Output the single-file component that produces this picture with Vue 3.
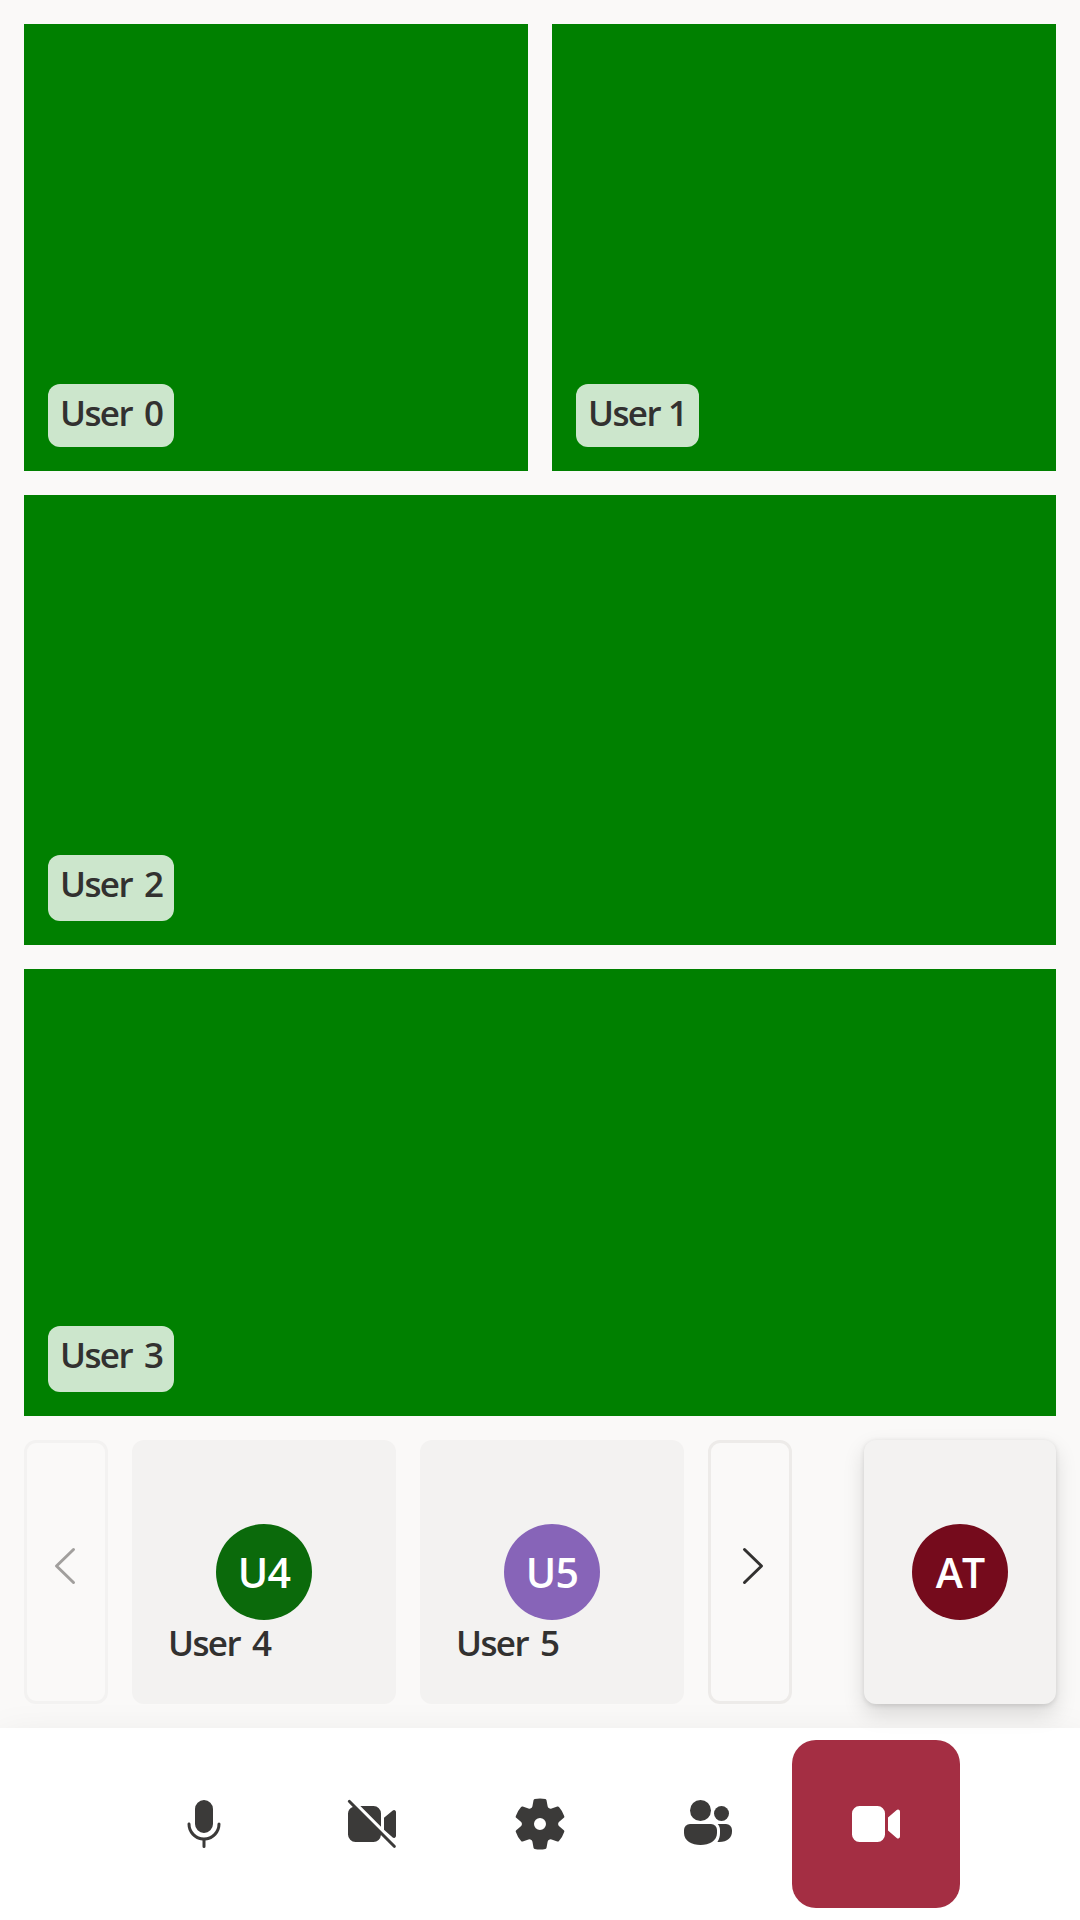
<script setup>
const gridUsers = ['User 0', 'User 1', 'User 2', 'User 3']
const trayUsers = [
  { name: 'User 4', initials: 'U4', tone: 'green' },
  { name: 'User 5', initials: 'U5', tone: 'purple' },
]
</script>

<template>
  <div class="call">
    <main class="stage">
      <section class="grid">
        <div v-for="user in gridUsers" :key="user" class="tile">
          <span class="label pill">{{ user }}</span>
        </div>
      </section>

      <section class="tray">
        <button class="pager disabled" aria-label="Previous">
          <svg width="24" height="40" viewBox="0 0 24 40"><path d="M20.5 3.5 3.5 20l17 16.5" /></svg>
        </button>
        <div v-for="user in trayUsers" :key="user.name" class="card">
          <div class="avatar" :class="user.tone">{{ user.initials }}</div>
          <span class="label name">{{ user.name }}</span>
        </div>
        <button class="pager next" aria-label="Next">
          <svg width="24" height="40" viewBox="0 0 24 40"><path d="M3.5 3.5 20.5 20l-17 16.5" /></svg>
        </button>
        <div class="card local">
          <div class="avatar maroon">AT</div>
        </div>
      </section>
    </main>

    <footer class="controls">
      <button aria-label="Microphone">
        <svg viewBox="0 0 20 20"><path d="M10 13a3 3 0 0 0 3-3V5a3 3 0 0 0-6 0v5a3 3 0 0 0 3 3ZM5 9.5c.28 0 .5.22.5.5a4.5 4.5 0 1 0 9 0 .5.5 0 0 1 1 0 5.5 5.5 0 0 1-5 5.48v2.02a.5.5 0 0 1-1 0v-2.02A5.5 5.5 0 0 1 4.5 10c0-.28.22-.5.5-.5Z" /></svg>
      </button>
      <button aria-label="Camera off">
        <svg viewBox="0 0 20 20"><path d="M2.85 2.15a.5.5 0 1 0-.7.7L3.6 4.3A2.5 2.5 0 0 0 2 6.5v7A2.5 2.5 0 0 0 4.5 16h6a2.5 2.5 0 0 0 2.48-2.31l4.17 4.16a.5.5 0 0 0 .7-.7l-15-15ZM6.12 4 13 10.88V6.5A2.5 2.5 0 0 0 10.5 4H6.12ZM14 11.88l2.9 2.6a.68.68 0 0 0 1.1-.5V6a.65.65 0 0 0-1.07-.5L14 7.93v3.95Z" /></svg>
      </button>
      <button aria-label="Settings">
        <svg viewBox="0 0 20 20"><path d="M1.91 7.38A8.5 8.5 0 0 1 3.7 4.3a.5.5 0 0 1 .54-.13l1.92.68a1 1 0 0 0 1.32-.76l.36-2a.5.5 0 0 1 .4-.4 8.53 8.53 0 0 1 3.55 0c.2.04.35.2.38.4l.37 2a1 1 0 0 0 1.32.76l1.92-.68a.5.5 0 0 1 .54.13 8.5 8.5 0 0 1 1.78 3.08c.06.2 0 .4-.15.54l-1.56 1.32a1 1 0 0 0 0 1.52l1.56 1.32a.5.5 0 0 1 .15.54 8.5 8.5 0 0 1-1.78 3.08.5.5 0 0 1-.54.13l-1.92-.68a1 1 0 0 0-1.32.76l-.37 2a.5.5 0 0 1-.38.4 8.53 8.53 0 0 1-3.56 0 .5.5 0 0 1-.39-.4l-.36-2a1 1 0 0 0-1.32-.76l-1.92.68a.5.5 0 0 1-.54-.13 8.5 8.5 0 0 1-1.78-3.08.5.5 0 0 1 .15-.54l1.56-1.32a1 1 0 0 0 0-1.52L2.06 7.92a.5.5 0 0 1-.15-.54ZM8 10a2 2 0 1 0 4 0 2 2 0 0 0-4 0Z" /></svg>
      </button>
      <button aria-label="People">
        <svg viewBox="0 0 20 20">
          <circle cx="7.5" cy="5.5" r="3.5" />
          <circle cx="14.5" cy="6.5" r="2.5" />
          <path d="M4 10a2 2 0 0 0-2 2v1c0 2.6 2.6 4 5.5 4s5.5-1.4 5.5-4v-1a2 2 0 0 0-2-2H4Z" />
          <path d="M13.23 10c.48.53.77 1.23.77 2v1c0 1.1-.3 2.1-.86 2.97 3.06.24 4.86-1.27 4.86-3.47V12a2 2 0 0 0-2-2h-2.77Z" />
        </svg>
      </button>
      <button class="end" aria-label="Video">
        <svg viewBox="0 0 20 20"><path d="M13 6.5A2.5 2.5 0 0 0 10.5 4h-6A2.5 2.5 0 0 0 2 6.5v7A2.5 2.5 0 0 0 4.5 16h6a2.5 2.5 0 0 0 2.5-2.5v-7ZM14 7.8v4.4l2.9 2.45A.67.67 0 0 0 18 14.1V5.9a.67.67 0 0 0-1.1-.55L14 7.8Z" /></svg>
      </button>
    </footer>
  </div>
</template>

<style>
body {
  margin: 0;
}
</style>

<style scoped>
.call {
  display: flex;
  flex-direction: column;
  width: 1080px;
  height: 1920px;
  overflow: hidden;
  background: #faf9f8;
  color: #323130;
  font-family: "Open Sans", "Noto Sans", sans-serif;
}

.stage {
  display: flex;
  flex: 1;
  flex-direction: column;
  gap: 24px;
  box-sizing: border-box;
  padding: 24px;
}

.grid {
  display: grid;
  flex: 1;
  grid-template-columns: 1fr 1fr;
  grid-template-rows: 447px 450px 447px;
  gap: 24px;
}

.tile {
  display: flex;
  align-items: flex-end;
  box-sizing: border-box;
  padding: 24px;
  background: #008000;
}

.tile:nth-child(n + 3) {
  grid-column: 1 / -1;
}

.label {
  font-size: 35px;
  font-weight: 600;
  letter-spacing: -1.6px;
  line-height: 48px;
  white-space: nowrap;
  word-spacing: 4.5px;
}

.pill {
  box-sizing: border-box;
  width: 126px;
  height: 66px;
  padding: 5px 0 0 12px;
  border-radius: 12px;
  background: rgba(255, 255, 255, 0.8);
}

.tile:nth-child(-n + 2) .pill {
  height: 63px;
}

.tile:nth-child(2) .pill {
  width: 123px;
  word-spacing: 0.5px;
}

.tray {
  display: flex;
  gap: 24px;
  height: 264px;
}

button {
  display: flex;
  align-items: center;
  justify-content: center;
  box-sizing: border-box;
  margin: 0;
  padding: 0;
  border: 0;
  background: transparent;
}

.pager {
  width: 84px;
  padding-bottom: 12px;
  border: 3px solid #edebe9;
  border-radius: 12px;
}

.pager.disabled {
  padding-right: 3px;
  border-color: #f3f2f1;
}

.pager.next {
  padding-left: 5px;
}

.pager path {
  fill: none;
  stroke: #323130;
  stroke-width: 3;
  stroke-linecap: round;
  stroke-linejoin: round;
}

.pager.disabled path {
  stroke: #a19f9d;
}

.card {
  display: flex;
  flex-direction: column;
  align-items: center;
  box-sizing: border-box;
  width: 264px;
  padding-top: 84px;
  border-radius: 12px;
  background: #f3f2f1;
}

.local {
  z-index: 2;
  width: 192px;
  margin-left: auto;
  box-shadow: 0 9.6px 21.6px rgba(0, 0, 0, 0.132), 0 1.8px 5.4px rgba(0, 0, 0, 0.108);
}

.avatar {
  width: 96px;
  height: 96px;
  border-radius: 50%;
  color: #fff;
  font-size: 41px;
  font-weight: 600;
  letter-spacing: -0.8px;
  line-height: 96px;
  text-align: center;
}

.green {
  background: #0b6a0b;
}

.purple {
  background: #8764b8;
}

.maroon {
  background: #750b1c;
}

.name {
  align-self: flex-start;
  margin-top: -1px;
  margin-left: 36px;
}

.controls {
  display: flex;
  justify-content: center;
  box-sizing: border-box;
  height: 192px;
  padding: 12px 0;
  background: #fff;
  box-shadow: 0 19.2px 43.2px rgba(0, 0, 0, 0.132);
}

.controls button {
  width: 168px;
  height: 168px;
  border-radius: 24px;
}

.controls svg {
  width: 60px;
  height: 60px;
  fill: #3b3a39;
}

.controls .end {
  background: #a42e43;
}

.controls .end svg {
  fill: #fff;
}
</style>
